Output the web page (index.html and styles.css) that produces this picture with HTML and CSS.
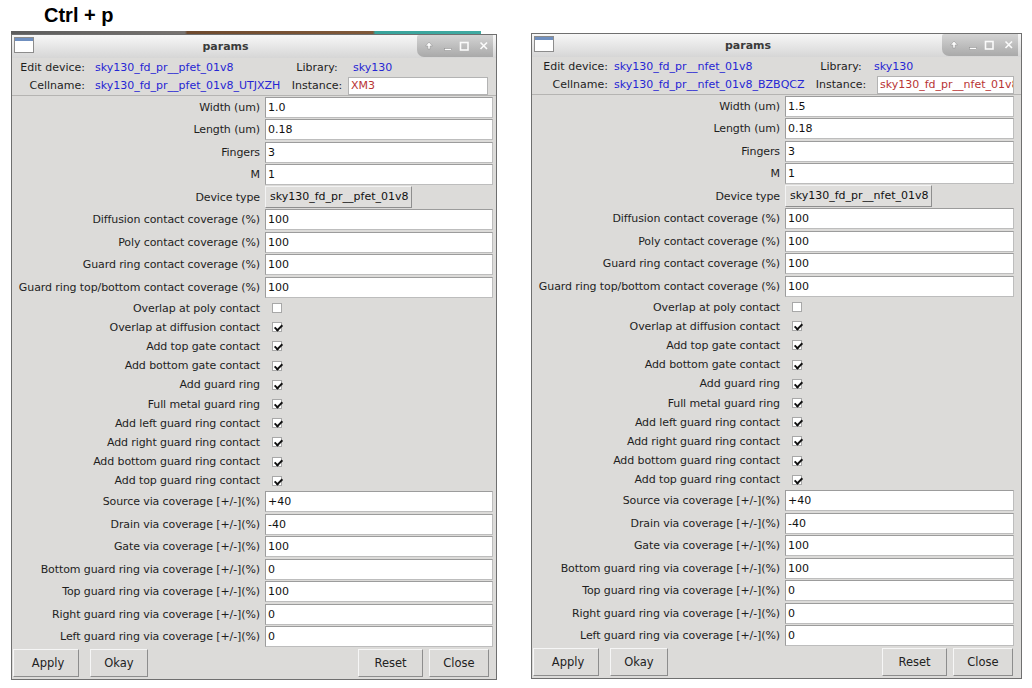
FILE: index.html
```html
<!DOCTYPE html>
<html>
<head>
<meta charset="utf-8">
<title>params</title>
<link rel="stylesheet" href="styles.css">
</head>
<body>
<div class="caption">Ctrl + p</div>
<div class="desk">
  <div class="col col-a">
    <div class="strip"></div>
    <div class="win win-a">
      <div class="titlebar">
        <span class="wicon"></span>
        <span class="title">params</span>
        <span class="wbtns"><svg width="76" height="21" viewBox="0 0 76 21"><g fill="#fbfbfb" stroke="#8a8a8a" stroke-width="0.5"><path d="M12 6 L15.5 10 L13.2 10 L13.2 13 L10.8 13 L10.8 10 L8.5 10 Z"/><rect x="27.5" y="12.5" width="7" height="2"/></g><g fill="none" stroke="#fbfbfb" stroke-width="1.6"><rect x="43.5" y="6.5" width="7.5" height="7.5"/><path d="M63.5 6.5 L70 13 M70 6.5 L63.5 13"/></g></svg></span>
      </div>
      <div class="head">
        <span class="hl">Edit device:</span><span class="hv">sky130_fd_pr__pfet_01v8</span><span class="hl3">Library:</span><span class="hv4">sky130</span>
        <span class="hl">Cellname:</span><span class="hv">sky130_fd_pr__pfet_01v8_UTJXZH</span><span class="hl3">Instance:</span><span class="inst">XM3</span>
      </div>
      <div class="form">
        <div class="row"><span class="lab">Width (um)</span><span class="ent">1.0</span></div>
        <div class="row"><span class="lab">Length (um)</span><span class="ent">0.18</span></div>
        <div class="row"><span class="lab">Fingers</span><span class="ent">3</span></div>
        <div class="row"><span class="lab">M</span><span class="ent">1</span></div>
        <div class="row"><span class="lab">Device type</span><span class="dbtn">sky130_fd_pr__pfet_01v8</span></div>
        <div class="row"><span class="lab">Diffusion contact coverage (%)</span><span class="ent">100</span></div>
        <div class="row"><span class="lab">Poly contact coverage (%)</span><span class="ent">100</span></div>
        <div class="row"><span class="lab">Guard ring contact coverage (%)</span><span class="ent">100</span></div>
        <div class="row"><span class="lab">Guard ring top/bottom contact coverage (%)</span><span class="ent">100</span></div>
        <div class="row ck"><span class="lab">Overlap at poly contact</span><span class="cb"></span></div>
        <div class="row ck"><span class="lab">Overlap at diffusion contact</span><span class="cb on"></span></div>
        <div class="row ck"><span class="lab">Add top gate contact</span><span class="cb on"></span></div>
        <div class="row ck"><span class="lab">Add bottom gate contact</span><span class="cb on"></span></div>
        <div class="row ck"><span class="lab">Add guard ring</span><span class="cb on"></span></div>
        <div class="row ck"><span class="lab">Full metal guard ring</span><span class="cb on"></span></div>
        <div class="row ck"><span class="lab">Add left guard ring contact</span><span class="cb on"></span></div>
        <div class="row ck"><span class="lab">Add right guard ring contact</span><span class="cb on"></span></div>
        <div class="row ck"><span class="lab">Add bottom guard ring contact</span><span class="cb on"></span></div>
        <div class="row ck"><span class="lab">Add top guard ring contact</span><span class="cb on"></span></div>
        <div class="row"><span class="lab">Source via coverage [+/-](%)</span><span class="ent">+40</span></div>
        <div class="row"><span class="lab">Drain via coverage [+/-](%)</span><span class="ent">-40</span></div>
        <div class="row"><span class="lab">Gate via coverage [+/-](%)</span><span class="ent">100</span></div>
        <div class="row"><span class="lab">Bottom guard ring via coverage [+/-](%)</span><span class="ent">0</span></div>
        <div class="row"><span class="lab">Top guard ring via coverage [+/-](%)</span><span class="ent">100</span></div>
        <div class="row"><span class="lab">Right guard ring via coverage [+/-](%)</span><span class="ent">0</span></div>
        <div class="row"><span class="lab">Left guard ring via coverage [+/-](%)</span><span class="ent">0</span></div>
      </div>
      <div class="btns">
        <span class="btn b-apply">Apply</span><span class="btn b-okay">Okay</span><span class="spacer"></span><span class="btn b-reset">Reset</span><span class="btn b-close">Close</span>
      </div>
    </div>
  </div>

  <div class="col col-b">
    <div class="win win-b">
      <div class="titlebar">
        <span class="wicon"></span>
        <span class="title">params</span>
        <span class="wbtns"><svg width="76" height="21" viewBox="0 0 76 21"><g fill="#fbfbfb" stroke="#8a8a8a" stroke-width="0.5"><path d="M12 6 L15.5 10 L13.2 10 L13.2 13 L10.8 13 L10.8 10 L8.5 10 Z"/><rect x="27.5" y="12.5" width="7" height="2"/></g><g fill="none" stroke="#fbfbfb" stroke-width="1.6"><rect x="43.5" y="6.5" width="7.5" height="7.5"/><path d="M63.5 6.5 L70 13 M70 6.5 L63.5 13"/></g></svg></span>
      </div>
      <div class="head">
        <span class="hl">Edit device:</span><span class="hv">sky130_fd_pr__nfet_01v8</span><span class="hl3">Library:</span><span class="hv4">sky130</span>
        <span class="hl">Cellname:</span><span class="hv">sky130_fd_pr__nfet_01v8_BZBQCZ</span><span class="hl3">Instance:</span><span class="inst">sky130_fd_pr__nfet_01v8</span>
      </div>
      <div class="form">
        <div class="row"><span class="lab">Width (um)</span><span class="ent">1.5</span></div>
        <div class="row"><span class="lab">Length (um)</span><span class="ent">0.18</span></div>
        <div class="row"><span class="lab">Fingers</span><span class="ent">3</span></div>
        <div class="row"><span class="lab">M</span><span class="ent">1</span></div>
        <div class="row"><span class="lab">Device type</span><span class="dbtn">sky130_fd_pr__nfet_01v8</span></div>
        <div class="row"><span class="lab">Diffusion contact coverage (%)</span><span class="ent">100</span></div>
        <div class="row"><span class="lab">Poly contact coverage (%)</span><span class="ent">100</span></div>
        <div class="row"><span class="lab">Guard ring contact coverage (%)</span><span class="ent">100</span></div>
        <div class="row"><span class="lab">Guard ring top/bottom contact coverage (%)</span><span class="ent">100</span></div>
        <div class="row ck"><span class="lab">Overlap at poly contact</span><span class="cb"></span></div>
        <div class="row ck"><span class="lab">Overlap at diffusion contact</span><span class="cb on"></span></div>
        <div class="row ck"><span class="lab">Add top gate contact</span><span class="cb on"></span></div>
        <div class="row ck"><span class="lab">Add bottom gate contact</span><span class="cb on"></span></div>
        <div class="row ck"><span class="lab">Add guard ring</span><span class="cb on"></span></div>
        <div class="row ck"><span class="lab">Full metal guard ring</span><span class="cb on"></span></div>
        <div class="row ck"><span class="lab">Add left guard ring contact</span><span class="cb on"></span></div>
        <div class="row ck"><span class="lab">Add right guard ring contact</span><span class="cb on"></span></div>
        <div class="row ck"><span class="lab">Add bottom guard ring contact</span><span class="cb on"></span></div>
        <div class="row ck"><span class="lab">Add top guard ring contact</span><span class="cb on"></span></div>
        <div class="row"><span class="lab">Source via coverage [+/-](%)</span><span class="ent">+40</span></div>
        <div class="row"><span class="lab">Drain via coverage [+/-](%)</span><span class="ent">-40</span></div>
        <div class="row"><span class="lab">Gate via coverage [+/-](%)</span><span class="ent">100</span></div>
        <div class="row"><span class="lab">Bottom guard ring via coverage [+/-](%)</span><span class="ent">100</span></div>
        <div class="row"><span class="lab">Top guard ring via coverage [+/-](%)</span><span class="ent">0</span></div>
        <div class="row"><span class="lab">Right guard ring via coverage [+/-](%)</span><span class="ent">0</span></div>
        <div class="row"><span class="lab">Left guard ring via coverage [+/-](%)</span><span class="ent">0</span></div>
      </div>
      <div class="btns">
        <span class="btn b-apply">Apply</span><span class="btn b-okay">Okay</span><span class="spacer"></span><span class="btn b-reset">Reset</span><span class="btn b-close">Close</span>
      </div>
    </div>
  </div>
</div>
</body>
</html>
```

FILE: styles.css
```css
* { box-sizing: border-box; }

body {
  margin: 0;
  background: #ffffff;
  font-family: "DejaVu Sans", "Noto Sans", sans-serif;
  font-size: 11px;
  color: #1e1e1e;
}

.caption {
  height: 31px;
  padding: 3px 0 0 44px;
  font: bold 20px/24px "Liberation Sans", Arial, sans-serif;
  color: #000;
}

.desk {
  display: flex;
  align-items: flex-start;
  gap: 34px;
  padding-left: 11px;
}

.col-a { width: 486px; }
.col-b { width: 491px; margin-top: 2px; }

.strip {
  height: 3px;
  margin-right: 16px;
  background: linear-gradient(90deg, #5c5c5c 0, #777370 37%, #6e4a2e 37.5%, #80593a 77%, #38a39b 77.5%, #40aaa2 100%);
}

.win {
  background: #dcdbd9;
  border: 1px solid #6f6f6f;
}

.win-a {
  --c1: 74px; --c2: 203px; --c3: 56px; --c4: 143px;
  --p2: 9px; --p4: 8px; --m4: 3px;
  --pr: 3px; --bpr: 7px;
}
.win-b {
  --c1: 77px; --c2: 204px; --c3: 56px; --c4: 145px;
  --p2: 5px; --p4: 5px; --m4: 8px;
  --pr: 7px; --bpr: 8px;
}

/* title bar */
.titlebar {
  height: 23px;
  display: flex;
  align-items: flex-start;
  background: linear-gradient(#f7f7f7, #d6d6d6);
}
.wicon {
  width: 20px;
  height: 16px;
  margin: 2px 0 0 2px;
  border: 1px solid #8c8c8c;
  background: linear-gradient(#6f8fbf 0, #6f8fbf 3px, #ffffff 3px);
  flex: none;
}
.title {
  flex: 1;
  text-align: center;
  font-weight: bold;
  font-size: 11px;
  line-height: 23px;
  color: #3a3a3a;
}
.wbtns {
  flex: none;
  width: 76px;
  height: 22px;
  margin: 0 3px 0 0;
  padding-top: 1px;
  border-radius: 2px 0 0 7px;
  background: linear-gradient(#d4d4d4, #a9a9a9);
}
.wbtns svg { display: block; }

/* header */
.head {
  display: grid;
  grid-template-columns: var(--c1) var(--c2) var(--c3) var(--c4);
  grid-template-rows: 18px 19px;
  align-items: center;
  border-bottom: 1px solid #b5b4b2;
  white-space: nowrap;
}
.hl { text-align: right; padding-right: 1px; }
.hv { color: #2626d4; padding-left: var(--p2); }
.hl3 { text-align: center; }
.hv4 { color: #2626d4; padding-left: var(--p4); }
.inst {
  margin-left: var(--m4);
  height: 18px;
  background: #fff;
  border: 1px solid #b3b3b3;
  color: #b83434;
  padding-left: 2px;
  line-height: 16px;
  overflow: hidden;
}

/* form rows */
.row {
  display: flex;
  align-items: center;
  height: 22.5px;
  padding-right: var(--pr);
}
.row.ck { height: 19.2px; }
.lab {
  flex: none;
  width: 253px;
  padding-right: 5px;
  text-align: right;
  white-space: nowrap;
  letter-spacing: -0.1px;
}
.ent {
  flex: 1;
  height: 21px;
  background: #fff;
  border: 1px solid #bdbdbd;
  border-top-color: #9c9c9c;
  border-left-color: #9c9c9c;
  padding-left: 2px;
  line-height: 19px;
  color: #111;
}
.dbtn {
  flex: none;
  width: 147px;
  height: 22px;
  padding: 0 4px;
  border: 1px solid;
  border-color: #f3f3f3 #8e8e8e #8e8e8e #f3f3f3;
  background: #dfdedc;
  line-height: 20px;
  color: #111;
  white-space: nowrap;
}
.cb {
  position: relative;
  flex: none;
  width: 10px;
  height: 10px;
  margin-left: 7px;
  background: #fff;
  border: 1px solid #a8a8a8;
}
.cb.on::after {
  content: "";
  position: absolute;
  left: 2.5px;
  top: 0;
  width: 3px;
  height: 6px;
  border: solid #111;
  border-width: 0 2px 2px 0;
  transform: rotate(45deg);
}

/* buttons */
.btns {
  display: flex;
  align-items: flex-start;
  height: 31px;
  padding: 1px var(--bpr) 0 1px;
}
.btn {
  height: 28px;
  border: 1px solid;
  border-color: #f6f6f6 #8d8d8d #8d8d8d #f6f6f6;
  background: #dcdbd9;
  text-align: center;
  line-height: 26px;
  font-size: 11.5px;
  color: #222;
}
.b-apply { width: 66px; padding-left: 4px; }
.b-okay { width: 58px; margin-left: 11px; }
.spacer { flex: 1; }
.b-reset { width: 65px; }
.b-close { width: 60px; margin-left: 6px; }
```
